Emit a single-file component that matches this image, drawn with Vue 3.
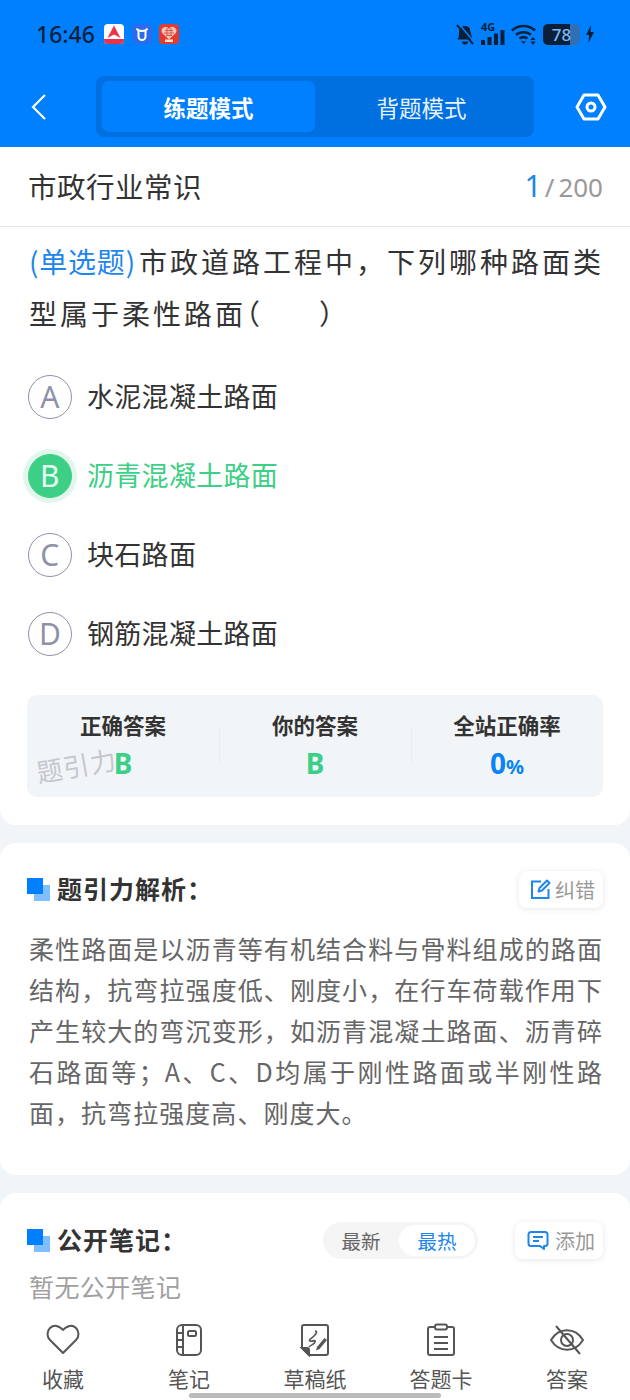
<script setup>
const options = [
  { key: 'A', text: '水泥混凝土路面' },
  { key: 'B', text: '沥青混凝土路面', right: true },
  { key: 'C', text: '块石路面' },
  { key: 'D', text: '钢筋混凝土路面' }
]

const tabs = ['收藏', '笔记', '草稿纸', '答题卡', '答案']
</script>

<template>
  <div class="page">
    <header class="top">
      <div class="status">
        <span class="time">16:46</span>
        <svg class="app" viewBox="0 0 20 20">
          <rect width="20" height="20" rx="4" fill="#fff" />
          <path d="M0 15h20v1a4 4 0 0 1-4 4H4a4 4 0 0 1-4-4z" fill="#e8324a" />
          <path d="M3.500 14 10 1.500 16.500 14l-6.500-3.500z" fill="#ee3348" />
        </svg>
        <svg class="app" viewBox="0 0 20 20">
          <rect width="20" height="20" rx="4" fill="#2a6cec" />
          <path d="M6.500 7v5.500a3.500 3.500 0 0 0 7 0V7" fill="none" stroke="#fff" stroke-width="2" />
          <path d="M4.500 4.500c1 2 2 2.500 5.500 2.500s4.500-.5 5.500-2.500" fill="none" stroke="#fff" stroke-width="1.800" />
        </svg>
        <svg class="app" viewBox="0 0 20 20">
          <rect width="20" height="20" rx="4" fill="#e63a2e" />
          <path d="M10 15.500 3.200 9a3.700 3.700 0 0 1 6.800-4 3.700 3.700 0 0 1 6.800 4z" fill="#f3c4b8" />
          <path d="M6 6.500h8M5 9h10M7 11.500h6M8 4v8M12 4v8" stroke="#e0564a" stroke-width="1" />
          <rect x="6" y="15.500" width="8" height="2.500" fill="#fbe3c8" />
        </svg>
        <span class="grow"></span>
        <div class="sys">
          <svg width="20" height="22" viewBox="0 0 20 22">
            <path d="M2.500 16.500C4 14.500 4 12 4 9a6 6 0 0 1 10.500-4l3 11.500z" fill="#0b2038" />
            <path d="M7 18.500a3 3 0 0 0 6 0z" fill="#0b2038" />
            <path d="M2 2l16 19" stroke="#0b2038" stroke-width="2" />
            <path d="M4 1l16 19" stroke="#0080ff" stroke-width="1.500" />
          </svg>
          <div class="net">
            <span class="g4">4G</span>
            <svg width="24" height="15" viewBox="0 0 24 15">
              <rect x="0" y="10" width="4" height="5" fill="#0b2038" />
              <rect x="6.500" y="7" width="4" height="8" fill="#0b2038" />
              <rect x="13" y="3.500" width="4" height="11.500" fill="#0b2038" />
              <rect x="19.500" y="0" width="4" height="15" fill="#0b2038" />
            </svg>
          </div>
          <svg width="26" height="22" viewBox="0 0 26 22">
            <path d="M1 7.500c6.500-6 16.500-6 23 0M5 11.800c4-3.500 11-3.500 15 0M8.500 15.500c2.300-1.600 5.700-1.600 8 0" fill="none" stroke="#0b2038" stroke-width="2.600" />
            <path d="m12.500 21-2.500-2.800h5z" fill="#0b2038" />
            <path d="m22 14 2.500 3h-5zM22 22l2.500-3.500h-5z" fill="#0b2038" />
          </svg>
          <div class="battery"><span>78</span></div>
          <svg width="8" height="18" viewBox="0 0 8 18">
            <path d="M5 0 0 10h3l-.5 8L8 7H4.500z" fill="#0b2038" />
          </svg>
        </div>
      </div>
      <nav class="nav">
        <svg class="back" width="18" height="28" viewBox="0 0 18 28">
          <path d="M15 2 3 14l12 12" fill="none" stroke="#fff" stroke-width="2.200" />
        </svg>
        <div class="segment">
          <div class="seg on">练题模式</div>
          <div class="seg">背题模式</div>
        </div>
        <svg class="gear" width="32" height="28" viewBox="0 0 32 28">
          <path d="M9 2h14l7 12-7 12H9L2 14z" fill="none" stroke="#fff" stroke-width="3" stroke-linejoin="round" />
          <circle cx="16" cy="14" r="4" fill="none" stroke="#fff" stroke-width="3" />
        </svg>
      </nav>
    </header>

    <main class="scroll">
      <section class="card question">
        <div class="subject">
          <span class="subject-name">市政行业常识</span>
          <span class="count"><b>1</b><i>/</i>200</span>
        </div>
        <p class="stem"><span class="kind">(单选题)</span>市政道路工程中，下列哪种路面类型属于柔性路面<span class="bracket">（</span>&emsp;&ensp;）</p>
        <ul class="options">
          <li v-for="o in options" :key="o.key" :class="['option', { right: o.right }]">
            <span class="letter">{{ o.key }}</span>
            <span class="option-text">{{ o.text }}</span>
          </li>
        </ul>
        <div class="stats">
          <div class="stat">
            <div class="stat-label">正确答案</div>
            <div class="stat-value green">B</div>
          </div>
          <div class="stat">
            <div class="stat-label">你的答案</div>
            <div class="stat-value green">B</div>
          </div>
          <div class="stat">
            <div class="stat-label">全站正确率</div>
            <div class="stat-value blue">0<small>%</small></div>
          </div>
          <span class="watermark">题引力</span>
        </div>
      </section>

      <section class="card analysis">
        <div class="head">
          <span class="mark"></span>
          <h2>题引力解析：</h2>
          <span class="grow"></span>
          <button class="chip">
            <svg width="21" height="21" viewBox="0 0 21 21">
              <path d="M11 2.500H2v16.500h16.500V10" fill="none" stroke="#1e86ec" stroke-width="2" />
              <path d="m8.500 12.500 1-3.500L17 1.500l2.500 2.500-7.500 7.500z" fill="none" stroke="#1e86ec" stroke-width="2" stroke-linejoin="round" />
            </svg>
            纠错
          </button>
        </div>
        <p class="analysis-text">柔性路面是以沥青等有机结合料与骨料组成的路面结构，抗弯拉强度低、刚度小，在行车荷载作用下产生较大的弯沉变形，如沥青混凝土路面、沥青碎石路面等；A、C、D均属于刚性路面或半刚性路面，抗弯拉强度高、刚度大。</p>
      </section>

      <section class="card notes">
        <div class="head">
          <span class="mark"></span>
          <h2>公开笔记：</h2>
          <span class="grow"></span>
          <div class="sort">
            <span class="sort-item">最新</span>
            <span class="sort-item on">最热</span>
          </div>
          <button class="chip add">
            <svg width="22" height="21" viewBox="0 0 22 21">
              <path d="M4 2h14a2.500 2.500 0 0 1 2.500 2.500v9A2.500 2.500 0 0 1 18 16h-1v3l-4-3H4a2.500 2.500 0 0 1-2.500-2.500v-9A2.500 2.500 0 0 1 4 2z" fill="none" stroke="#1e86ec" stroke-width="2" stroke-linejoin="round" />
              <path d="M6 7h10M6 11h6" stroke="#1e86ec" stroke-width="2" />
            </svg>
            添加
          </button>
        </div>
        <p class="empty">暂无公开笔记</p>
      </section>
    </main>

    <footer class="tabs">
      <div v-for="(t, i) in tabs" :key="t" class="tab">
        <svg width="36" height="34" viewBox="0 0 36 34" fill="none" stroke="#555" stroke-width="2">
          <template v-if="i === 0">
            <path d="M18 30 5 17a8.500 8.500 0 0 1 0-12c3.500-3.300 9-3 13 2 4-5 9.500-5.300 13-2a8.500 8.500 0 0 1 0 12z" stroke-linejoin="round" />
          </template>
          <template v-else-if="i === 1">
            <rect x="6" y="2" width="24" height="30" rx="5" />
            <path d="M12 2v30M6 10h6M6 17h6M6 24h6" />
            <rect x="17" y="8" width="8" height="5" rx="1.500" />
          </template>
          <template v-else-if="i === 2">
            <path d="M7 2h22a2 2 0 0 1 2 2v26a2 2 0 0 1-2 2H12l-7-7V4a2 2 0 0 1 2-2z" stroke-linejoin="round" />
            <path d="M5 25h5a2 2 0 0 1 2 2v5l-7-7z" fill="#555" />
            <path d="M18 8c3 0 1 3-1 5s-6 4-4 5 6-2 5 1-5 3-6 5" stroke-width="1.600" />
            <path d="m20 24 7.500-9 2.500 2-7.500 9-3.500 1.500z" fill="#555" stroke="none" />
          </template>
          <template v-else-if="i === 3">
            <path d="M11 4H7a2 2 0 0 0-2 2v24a2 2 0 0 0 2 2h22a2 2 0 0 0 2-2V6a2 2 0 0 0-2-2h-4" />
            <rect x="12" y="1.500" width="12" height="5" rx="2" />
            <path d="M11 14h14M11 20h14M11 26h14" />
          </template>
          <template v-else>
            <path d="M2 17c8-13 24-13 32 0-8 13-24 13-32 0z" stroke-linejoin="round" />
            <circle cx="18" cy="17" r="6" />
            <path d="M7 3l24 28" />
          </template>
        </svg>
        <span>{{ t }}</span>
      </div>
      <span class="home-bar"></span>
    </footer>
  </div>
</template>

<style scoped>
.page {
  width: 630px;
  height: 1400px;
  display: flex;
  flex-direction: column;
  overflow: hidden;
  background: #f2f5f8;
  font-family: "Noto Sans CJK SC", "Noto Sans", sans-serif;
  color: #333;
}

.grow {
  flex: 1;
}

/* 顶部 */
.top {
  height: 147px;
  flex: none;
  background: #0080ff;
}

.status {
  height: 76px;
  box-sizing: border-box;
  padding: 0 36px 8px 36px;
  display: flex;
  align-items: center;
  gap: 7.500px;
}

.time {
  font-family: "Noto Sans", sans-serif;
  font-size: 23px;
  font-weight: 500;
  color: #0b2038;
  margin-right: 2px;
}

.app {
  width: 20px;
  height: 20px;
}

.sys {
  display: flex;
  align-items: center;
  gap: 6px;
}

.net {
  position: relative;
  width: 24px;
  height: 22px;
  display: flex;
  align-items: flex-end;
}

.g4 {
  position: absolute;
  left: 0;
  top: -2px;
  font: 700 11px/12px "Noto Sans", sans-serif;
  color: #0b2038;
}

.battery {
  width: 37px;
  height: 21px;
  border-radius: 5px;
  background: linear-gradient(90deg, #0b2038 0 74%, #2f70b4 74%);
  display: flex;
  align-items: center;
  justify-content: center;
  font: 500 17px/21px "Noto Sans", sans-serif;
  color: #7ab8f5;
}

.nav {
  height: 61px;
  display: flex;
  align-items: center;
  padding: 0 23px 0 30px;
}

.back {
  flex: none;
}

.segment {
  width: 438px;
  height: 61px;
  flex: none;
  box-sizing: border-box;
  margin: 0 41px 0 48px;
  padding: 5px 6px;
  background: #0070e0;
  border-radius: 8px;
  display: flex;
}

.seg {
  flex: 1;
  display: flex;
  align-items: center;
  justify-content: center;
  font-size: 22.500px;
  color: #e6f2ff;
  border-radius: 7px;
}

.seg.on {
  background: #0080ff;
  color: #fff;
  font-weight: 700;
}

.gear {
  flex: none;
}

.scroll {
  flex: 1;
  min-height: 0;
  overflow: hidden;
}

/* 题目 */
.card {
  background: #fff;
  border-radius: 16px;
  margin-bottom: 18px;
}

.question {
  height: 678px;
  border-radius: 0 0 16px 16px;
}

.subject {
  height: 80px;
  box-sizing: border-box;
  padding: 0 27px 2px 28px;
  border-bottom: 1px solid #e4e6ea;
  display: flex;
  align-items: center;
  justify-content: space-between;
}

.subject-name {
  font-size: 28.500px;
  letter-spacing: 0.500px;
  color: #333;
}

.count {
  font-family: "Noto Sans", sans-serif;
  font-size: 26px;
  color: #999;
}

.count b {
  font-weight: 400;
  font-size: 30px;
  color: #1e86ec;
}

.count i {
  font-style: normal;
  margin: 0 4px 0 3px;
}

.stem {
  margin: 8px 24px 0 29px;
  font-size: 28px;
  line-height: 52px;
  letter-spacing: 3px;
  color: #333;
}

.kind {
  color: #1e86ec;
  letter-spacing: 0.800px;
  margin-right: 3px;
}

.bracket {
  font-feature-settings: "halt";
  margin-right: 8px;
}

.options {
  list-style: none;
  margin: 18px 0 0;
  padding: 0 0 0 28px;
}

.option {
  height: 79px;
  display: flex;
  align-items: center;
  gap: 15px;
  font-size: 27px;
  letter-spacing: 0.300px;
  color: #333;
}

.option-text {
  margin-bottom: 2px;
}

.letter {
  width: 44px;
  height: 44px;
  box-sizing: border-box;
  border: 1.500px solid #8e92a8;
  border-radius: 50%;
  display: flex;
  align-items: center;
  justify-content: center;
  font: 400 30px "Noto Sans", sans-serif;
  color: #8e92a8;
}

.option.right {
  color: #3ccf85;
}

.option.right .letter {
  background: #3ccf85;
  border-color: #3ccf85;
  color: #e8fff3;
  box-shadow: 0 0 0 5px #e2f7ec;
}

.stats {
  position: relative;
  margin: 22px 27px 0;
  height: 102px;
  border-radius: 10px;
  background: #f2f5f8;
  display: grid;
  grid-template-columns: repeat(3, 1fr);
  align-items: center;
}

.stat {
  position: relative;
  height: 64px;
  text-align: center;
}

.stat + .stat::before {
  content: "";
  position: absolute;
  left: 0;
  top: 15px;
  height: 34px;
  border-left: 1px solid #e9ecf0;
}

.stat-label {
  margin-top: -3px;
  font-size: 21.500px;
  line-height: 28px;
  font-weight: 700;
  color: #333;
}

.stat-value {
  margin-top: 9px;
  font: 700 28px/30px "Noto Sans", sans-serif;
}

.stat-value small {
  font-size: 20px;
}

.green {
  color: #3ccf85;
}

.blue {
  color: #0a84f5;
}

.watermark {
  position: absolute;
  left: 9px;
  top: 53px;
  font-size: 26px;
  line-height: 34px;
  letter-spacing: 1px;
  color: #c4c8cc;
  transform: rotate(-10deg);
}

/* 解析 */
.analysis {
  height: 332px;
  box-sizing: border-box;
  padding: 26px 27px 0 29px;
}

.head {
  height: 40px;
  display: flex;
  align-items: center;
}

.mark {
  position: relative;
  width: 23px;
  height: 23px;
  margin: 0 7px 0 -2px;
  flex: none;
}

.mark::before {
  content: "";
  position: absolute;
  left: 7px;
  top: 7px;
  width: 16px;
  height: 16px;
  background: #80bfff;
}

.mark::after {
  content: "";
  position: absolute;
  left: 0;
  top: 0;
  width: 16px;
  height: 16px;
  background: #0080ff;
}

h2 {
  margin: 0 0 3px;
  font-size: 25px;
  font-weight: 700;
  letter-spacing: 1px;
  color: #333;
}

.chip {
  height: 37px;
  padding: 0 8px 0 11px;
  display: flex;
  align-items: center;
  gap: 4px;
  background: #fff;
  border: none;
  border-radius: 8px;
  box-shadow: 0 1px 6px rgba(0, 0, 0, 0.1);
  font-family: inherit;
  font-size: 20px;
  color: #999;
}

.chip.add {
  padding-left: 12px;
  gap: 6px;
}

.analysis-text {
  margin: 19px 0 0;
  font-size: 25px;
  line-height: 41px;
  letter-spacing: 1.050px;
  text-align: justify;
  color: #666;
}

/* 笔记 */
.notes {
  padding: 27px 27px 40px 29px;
}

.sort {
  height: 37px;
  display: flex;
  align-items: center;
  padding: 0 3px 0 0;
  margin-right: 37px;
  background: #f5f5f5;
  border-radius: 19px;
}

.sort-item {
  width: 76px;
  height: 31px;
  display: flex;
  align-items: center;
  justify-content: center;
  font-size: 19.500px;
  color: #666;
  border-radius: 16px;
}

.sort-item.on {
  background: #fff;
  color: #1e86ec;
}

.empty {
  margin: 8px 0 0;
  font-size: 25px;
  line-height: 36px;
  letter-spacing: 0.400px;
  color: #a0a0a0;
}

/* 底部 */
.tabs {
  position: relative;
  flex: none;
  height: 90px;
  background: #fff;
  display: grid;
  grid-template-columns: repeat(5, 1fr);
}

.tab {
  display: flex;
  flex-direction: column;
  align-items: center;
  padding-top: 13px;
  font-size: 21px;
  line-height: 30px;
  color: #555;
}

.tab svg {
  margin-bottom: 6px;
}

.home-bar {
  position: absolute;
  left: 189px;
  bottom: 2px;
  width: 252px;
  height: 5px;
  border-radius: 3px;
  background: #bbb;
}
</style>

<style>
html,
body {
  margin: 0;
  background: #fff;
}
</style>
